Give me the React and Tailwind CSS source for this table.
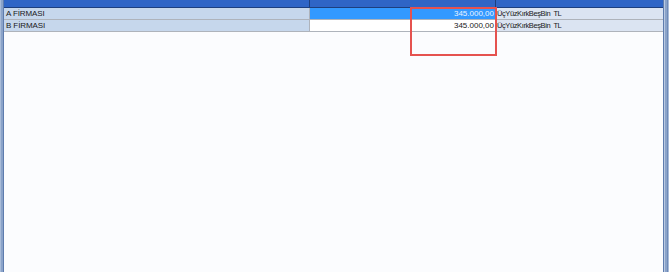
import React from 'react';

const rows = [
  { name: 'A FİRMASI', amount: '345.000,00', text: 'ÜçYüzKırkBeşBin  TL', selected: true },
  { name: 'B FİRMASI', amount: '345.000,00', text: 'ÜçYüzKırkBeşBin  TL', selected: false },
];

function Frame({ side }) {
  // kenar çerçevesi
  return side === 'left' ? (
    <div className="flex h-full w-[4px] shrink-0">
      <div className="w-[1px] bg-[#a9bcd9]" />
      <div className="w-[2px] bg-[#8aa3c9]" />
      <div className="w-[1px] bg-[#5e7cae]" />
    </div>
  ) : (
    <div className="flex h-full w-[6px] shrink-0">
      <div className="w-[1px] bg-[#5e7cae]" />
      <div className="w-[1px] bg-[#b9c9e2]" />
      <div className="w-[2px] bg-[#8aa3c9]" />
      <div className="w-[1px] bg-[#6f8bb8]" />
      <div className="w-[1px] bg-[#a9bcd9]" />
    </div>
  );
}

export default function App() {
  return (
    <div
      className="relative flex h-[272px] w-[669px] overflow-hidden bg-white text-[8px] leading-none text-[#1a1a1a]"
      style={{ fontFamily: '"Liberation Sans", Arial, sans-serif' }}
    >
      <Frame side="left" />
      <div className="flex min-w-0 flex-1 flex-col bg-[#fbfcfe]">
        {/* başlık */}
        <div className="flex h-[8px] shrink-0 border-b border-[#1d3f7e] bg-[#2f65c6]">
          <div className="w-[306px] border-r border-[#1d3f7e]" />
          <div className="w-[186px] border-r border-[#1d3f7e]" />
          <div className="flex-1" />
        </div>
        {rows.map((r) => (
          <div key={r.name} className="flex h-[12px] shrink-0 border-b border-[#aeb3bb]">
            <div className="flex w-[306px] items-center border-r border-[#aeb3bb] bg-[#c6d7ec] pl-[2px] tracking-[-0.1px]">
              {r.name}
            </div>
            <div
              className={`flex w-[186px] items-center justify-end border-r border-[#aeb3bb] pr-[1px] ${
                r.selected ? 'bg-[#3399ff] text-[#eaf3ff]' : 'bg-white'
              }`}
            >
              {r.amount}
            </div>
            <div className="flex flex-1 items-center whitespace-pre bg-[#dbe4f2] pl-[1px] text-[7.5px] tracking-[-0.4px]">
              {r.text}
            </div>
          </div>
        ))}
        <div className="flex-1" />
      </div>
      <Frame side="right" />

      {/* vurgulama kutusu */}
      <div className="pointer-events-none absolute left-[410px] top-[7px] h-[49px] w-[87px] border-2 border-[#e5524f]" />
    </div>
  );
}
